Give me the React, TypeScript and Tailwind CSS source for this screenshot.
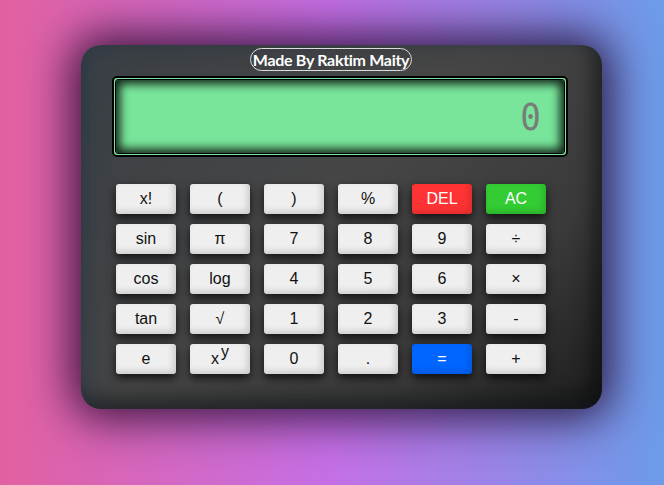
const rows: string[][] = [
  ["x!", "(", ")", "%", "DEL", "AC"],
  ["sin", "π", "7", "8", "9", "÷"],
  ["cos", "log", "4", "5", "6", "×"],
  ["tan", "√", "1", "2", "3", "-"],
  ["e", "xy", "0", ".", "=", "+"],
];

function Key({ label }: { label: string }) {
  let color = "bg-[#efefef] text-[#111]";
  if (label === "DEL") color = "bg-[#ff3333] text-white";
  if (label === "AC") color = "bg-[#33cc33] text-white";
  if (label === "=") color = "bg-[#0066ff] text-white";

  return (
    <button
      className={`h-[30px] w-[60px] rounded-[3px] flex items-center justify-center text-[16px] font-['Liberation_Sans',Arial,sans-serif] shadow-[0_4px_10px_rgba(0,0,0,0.75),inset_-3px_-3px_6px_rgba(0,0,0,0.14)] ${color}`}
    >
      {label === "xy" ? (
        <span>
          x<span className="relative -top-[7px] ml-[2px]">y</span>
        </span>
      ) : (
        label
      )}
    </button>
  );
}

export default function App() {
  return (
    <div className="w-[664px] h-[485px] overflow-hidden bg-[linear-gradient(to_right,#e260a0,#c56fe6_50%,#6c9be9)] pt-[45px] pl-[81px]">
      <div className="w-[521px] h-[364px] rounded-[20px] bg-[linear-gradient(135deg,#3a3f45,#464646_45%,#3a3a3a_75%,#1c1c1c)] shadow-[0_0_45px_10px_rgba(20,0,30,0.8),inset_10px_0_20px_rgba(40,60,80,0.35),inset_-8px_-10px_20px_rgba(0,0,0,0.5)] pl-[35px] pr-[56px] pt-[3px]">
        <div className="flex justify-center">
          <div className="h-[23px] px-[2px] rounded-full border border-[#dcdcdc] flex items-center text-white text-[16px] font-bold font-['Lato',sans-serif] tracking-[-0.3px]">
            Made By Raktim Maity
          </div>
        </div>

        <div className="ml-[-4px] mt-[5px] w-[456px] h-[81px] rounded-[5px] border-2 border-black bg-[#78e59a] p-px">
          <div className="h-full rounded-[3px] bg-[#78e59a] border border-black shadow-[inset_0_0_10px_4px_rgba(0,0,0,0.85)] flex items-center justify-end pr-[22px]">
            <span className="text-[38px] leading-none text-[#777d78] font-['DejaVu_Sans_Mono',monospace] font-extralight scale-x-90">
              0
            </span>
          </div>
        </div>

        <div className="mt-[27px] grid grid-cols-6 gap-x-[14px] gap-y-[10px] w-[430px]">
          {rows.flat().map((k) => (
            <Key key={k} label={k} />
          ))}
        </div>
      </div>
    </div>
  );
}
